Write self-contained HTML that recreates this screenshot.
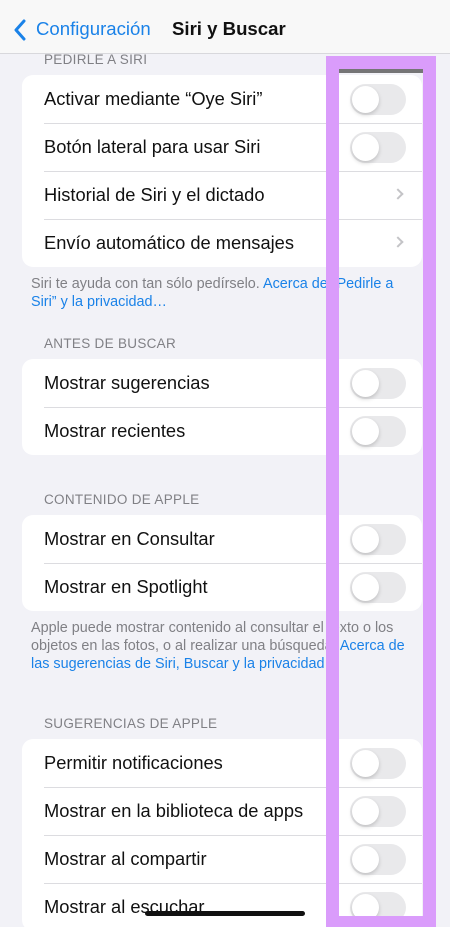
<!DOCTYPE html>
<html><head><meta charset="utf-8"><style>
*{margin:0;padding:0;box-sizing:border-box}
html,body{width:450px;height:927px;overflow:hidden}
body{background:#f2f2f7;font-family:"Liberation Sans",sans-serif;position:relative}
.nav{position:absolute;top:0;left:0;width:450px;height:54px;background:#f8f8f8;border-bottom:1px solid #d8d8dc;z-index:2}
.back{position:absolute;left:36px;top:18px;color:#1a82e8;font-size:18.6px}
.title{position:absolute;left:172px;top:18px;font-size:18.6px;font-weight:bold;color:#111}
.hdr{position:absolute;left:44px;font-size:13.5px;color:#808085;letter-spacing:.3px}
.card{position:absolute;left:22px;width:400px;background:#fff;border-radius:11px;overflow:hidden}
.row{height:48px;position:relative;font-size:18.3px;color:#111;line-height:48px;padding-left:22px}
.row+.row:before{content:"";position:absolute;left:22px;right:0;top:0;border-top:1px solid #dcdce0}
.tg{position:absolute;left:328px;top:9px;width:56px;height:31px;border-radius:16px;background:#e9e9eb}
.tg:after{content:"";position:absolute;left:2px;top:2px;width:27px;height:27px;border-radius:50%;background:#fff;box-shadow:0 2px 4px rgba(0,0,0,.18)}
.chev{position:absolute;left:372px;top:19px;width:8px;height:8px;border-right:2px solid #c4c4c7;border-top:2px solid #c4c4c7;transform:rotate(45deg)}
.ft{position:absolute;left:31px;width:385px;font-size:14.4px;color:#808085;line-height:18px}
.ft a{color:#1a82e8}
.pur{position:absolute;left:326px;top:56px;width:110px;height:871px;border:13px solid #da9cfb;border-bottom-width:11px;z-index:3}
.pur:before{content:"";position:absolute;left:0;right:0;top:0;height:4px;background:#555;opacity:.8}
.home{position:absolute;left:145px;top:911px;width:160px;height:5px;border-radius:3px;background:#111;z-index:4}
</style></head><body>
<div class="nav"><svg style="position:absolute;left:13px;top:19px" width="14" height="22" viewBox="0 0 14 22"><path d="M11 2 L3 11 L11 20" stroke="#1a82e8" stroke-width="3" fill="none" stroke-linecap="round" stroke-linejoin="round"/></svg><span class="back">Configuración</span><span class="title">Siri y Buscar</span></div>
<div class="hdr" style="top:52px">PEDIRLE A SIRI</div>
<div class="card" style="top:75px">
<div class="row">Activar mediante “Oye Siri”<span class="tg"></span></div>
<div class="row">Botón lateral para usar Siri<span class="tg"></span></div>
<div class="row">Historial de Siri y el dictado<span class="chev"></span></div>
<div class="row">Envío automático de mensajes<span class="chev"></span></div>
</div>
<div class="ft" style="top:275px">Siri te ayuda con tan sólo pedírselo. <a>Acerca de “Pedirle a Siri” y la privacidad…</a></div>
<div class="hdr" style="top:336px">ANTES DE BUSCAR</div>
<div class="card" style="top:359px">
<div class="row">Mostrar sugerencias<span class="tg"></span></div>
<div class="row">Mostrar recientes<span class="tg"></span></div>
</div>
<div class="hdr" style="top:492px">CONTENIDO DE APPLE</div>
<div class="card" style="top:515px">
<div class="row">Mostrar en Consultar<span class="tg"></span></div>
<div class="row">Mostrar en Spotlight<span class="tg"></span></div>
</div>
<div class="ft" style="top:619px">Apple puede mostrar contenido al consultar el texto o los objetos en las fotos, o al realizar una búsqueda. <a>Acerca de las sugerencias de Siri, Buscar y la privacidad…</a></div>
<div class="hdr" style="top:716px">SUGERENCIAS DE APPLE</div>
<div class="card" style="top:739px">
<div class="row">Permitir notificaciones<span class="tg"></span></div>
<div class="row">Mostrar en la biblioteca de apps<span class="tg"></span></div>
<div class="row">Mostrar al compartir<span class="tg"></span></div>
<div class="row">Mostrar al escuchar<span class="tg"></span></div>
</div>
<div class="pur"></div>
<div class="home"></div>
</body></html>
